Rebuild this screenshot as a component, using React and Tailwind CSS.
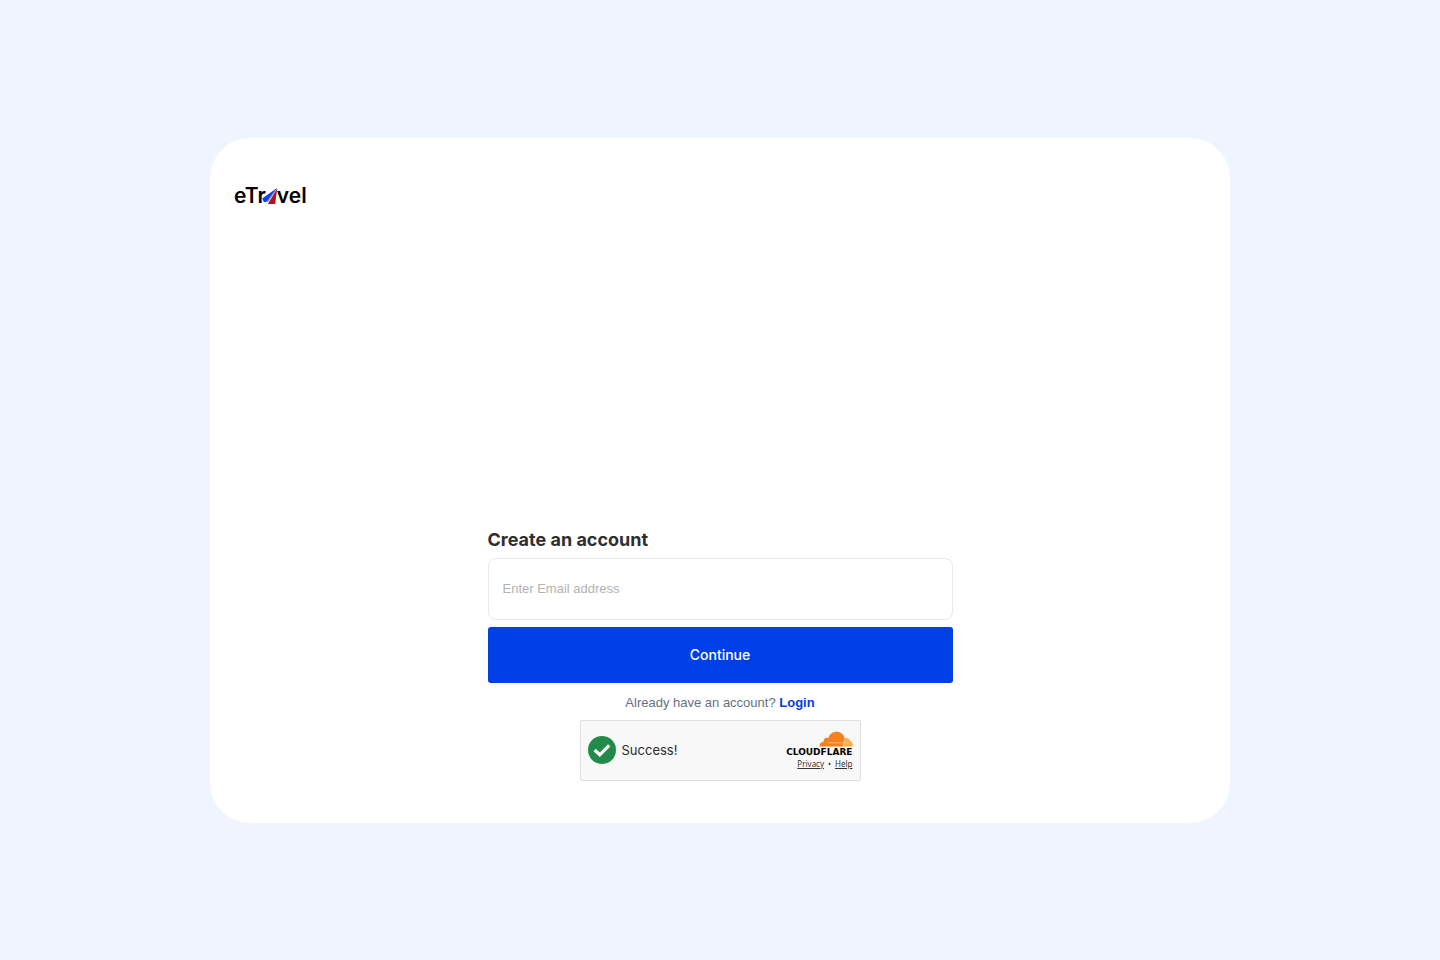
import { useState } from "react";

// LOGO
function Logo() {
  return (
    <a
      href="#"
      aria-label="eTravel"
      className="flex w-fit items-center text-[21px] leading-5 font-semibold text-black"
    >
      <span>eTr</span>
      <svg viewBox="0 0 11 18" className="h-[18px] w-[11px] overflow-visible" aria-hidden="true">
        <path d="M11 1 L-3.8 11.5 L-2 15.2 L2 14.6 Z" fill="#0b3ff0" />
        <path d="M9.5 2.5 L0.2 15.2 L2.4 14.6 Z" fill="#7d9dff" />
        <path d="M11.2 1.2 L1.8 17 L9.2 17 Z" fill="#b0141c" />
      </svg>
      <span>vel</span>
    </a>
  );
}

// GREEN TICK
function SuccessIcon() {
  return (
    <svg viewBox="0 0 28 28" className="size-7" aria-hidden="true">
      <circle cx="14" cy="14" r="14" fill="#228b49" />
      <path
        d="M6.6 14 L11.8 18.8 L21.2 9.4"
        fill="none"
        stroke="#fff"
        strokeWidth="3.2"
      />
    </svg>
  );
}

// CLOUD
function CloudIcon() {
  return (
    <svg viewBox="0 0 34 16" className="h-4 w-[34px]" aria-hidden="true">
      <path
        d="M24.5 15.5 L26 7.4 C27.5 6.6 30.2 7.4 31 9.8 C33 10.4 34 12.5 33.8 15.5 Z"
        fill="#fbad41"
      />
      <path
        d="M0.4 15.5 C0.4 12.6 2 11 4.6 10.8 C4 8.2 6.6 6 9.4 7.2 C10.4 3.4 13.6 0.8 17.4 0.8 C21.6 0.8 24.8 3.4 25.6 7.2 C26 9 25.2 10.8 24.2 15.5 Z"
        fill="#f6821f"
      />
      <path
        d="M9 11.8 L23.6 11.8 M26 11.8 L30.4 11.8"
        stroke="#fcc791"
        strokeWidth="0.8"
      />
      <path
        d="M25.4 9 L24.2 15.5"
        stroke="#f8f8f8"
        strokeWidth="0.6"
      />
    </svg>
  );
}

export default function App() {

  const [email, setEmail] = useState("");

  return (
    <div className="flex min-h-screen items-center justify-center bg-[#eff4ff] font-['Inter',sans-serif]">

      <main className="flex min-h-[685px] w-full max-w-[1020px] flex-col rounded-[40px] bg-white px-6 pt-12 pb-[42px]">

        <Logo />

        {/* FORM */}
        <form
          onSubmit={(e) => e.preventDefault()}
          className="mx-auto mt-auto flex w-full max-w-[465px] flex-col"
        >

          <label
            htmlFor="email"
            className="mb-1.5 text-lg leading-6 font-bold text-[#2f2f2f]"
          >
            Create an account
          </label>

          <input
            id="email"
            type="email"
            value={email}
            onChange={(e) => setEmail(e.target.value)}
            placeholder="Enter Email address"
            className="h-[62px] rounded-lg border border-[#e8e8ea] px-3.5 font-['Liberation_Sans',sans-serif] text-[13px] text-[#2b2b2b] placeholder:text-[#b3b3b3]"
          />

          <button
            type="submit"
            className="mt-[7px] h-14 rounded-[3px] bg-[#003fe6] text-sm font-medium text-white"
          >
            Continue
          </button>

          <p className="mt-2.5 text-center font-['Liberation_Sans',sans-serif] text-[13px] leading-5 text-[#697080]">
            Already have an account?{" "}
            <a href="#" className="font-bold text-[#003fe6]">
              Login
            </a>
          </p>

        </form>

        {/* CAPTCHA */}
        <div className="mx-auto mt-[7px] flex h-[61px] w-full max-w-[281px] items-center rounded-xs border border-[#dedede] bg-[#f8f8f8] px-[7px]">

          <SuccessIcon />

          <p className="ml-1.5 text-[13px] leading-5 text-[#2b2b2b]">
            Success!
          </p>

          <div className="ml-auto flex flex-col items-end">

            <CloudIcon />

            <p className="font-['DejaVu_Sans',sans-serif] text-[9px] leading-[11px] font-bold text-black">
              CLOUDFLARE
            </p>

            <p className="flex gap-1 font-['Noto_Sans',sans-serif] text-[8px] leading-3 text-[#333]">
              <a href="#" className="underline">Privacy</a>
              <span>•</span>
              <a href="#" className="underline">Help</a>
            </p>

          </div>
        </div>

      </main>
    </div>
  );
}
